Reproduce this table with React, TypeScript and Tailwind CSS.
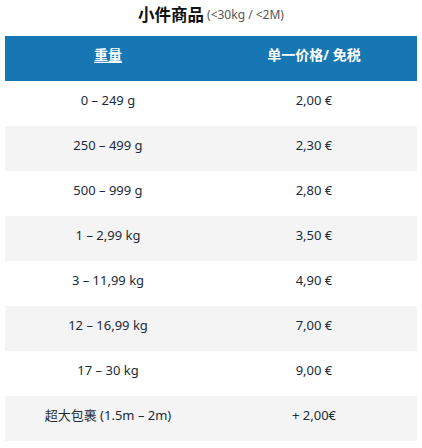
import React from "react";

const rows: [string, string][] = [
  ["0 – 249 g", "2,00 €"],
  ["250 – 499 g", "2,30 €"],
  ["500 – 999 g", "2,80 €"],
  ["1 – 2,99 kg", "3,50 €"],
  ["3 – 11,99 kg", "4,90 €"],
  ["12 – 16,99 kg", "7,00 €"],
  ["17 – 30 kg", "9,00 €"],
  ["超大包裹 (1.5m – 2m)", "+ 2,00€"],
];

export default function App() {
  return (
    <div
      className="w-[422px] h-[448px] bg-white"
      style={{ fontFamily: '"Noto Sans", "Noto Sans CJK SC", sans-serif' }}
    >
      <div className="h-[30px] flex items-center justify-center">
        <span className="text-[16.5px] font-bold text-[#111] leading-[20px]">小件商品</span>
        <span className="text-[12px] text-[#555] leading-[20px] ml-[3px]">(&lt;30kg / &lt;2M)</span>
      </div>
      <div className="mx-[5px] mt-[6px]">
        <div className="grid grid-cols-2 h-[45px] bg-[#1777b5] text-white text-[14px] font-bold leading-[20px] pt-[9px]">
          <div className="text-center"><span className="underline underline-offset-2">重量</span></div>
          <div className="text-center">单一价格/ 免税</div>
        </div>
        {rows.map(([w, p], i) => (
          <div
            key={i}
            className={
              "grid grid-cols-2 h-[45px] text-[13px] leading-[20px] pt-[9px] text-[#1c2b39] " +
              (i % 2 === 1 ? "bg-[#f4f4f4]" : "bg-white")
            }
          >
            <div className="text-center">{w}</div>
            <div className="text-center">{p}</div>
          </div>
        ))}
      </div>
    </div>
  );
}
